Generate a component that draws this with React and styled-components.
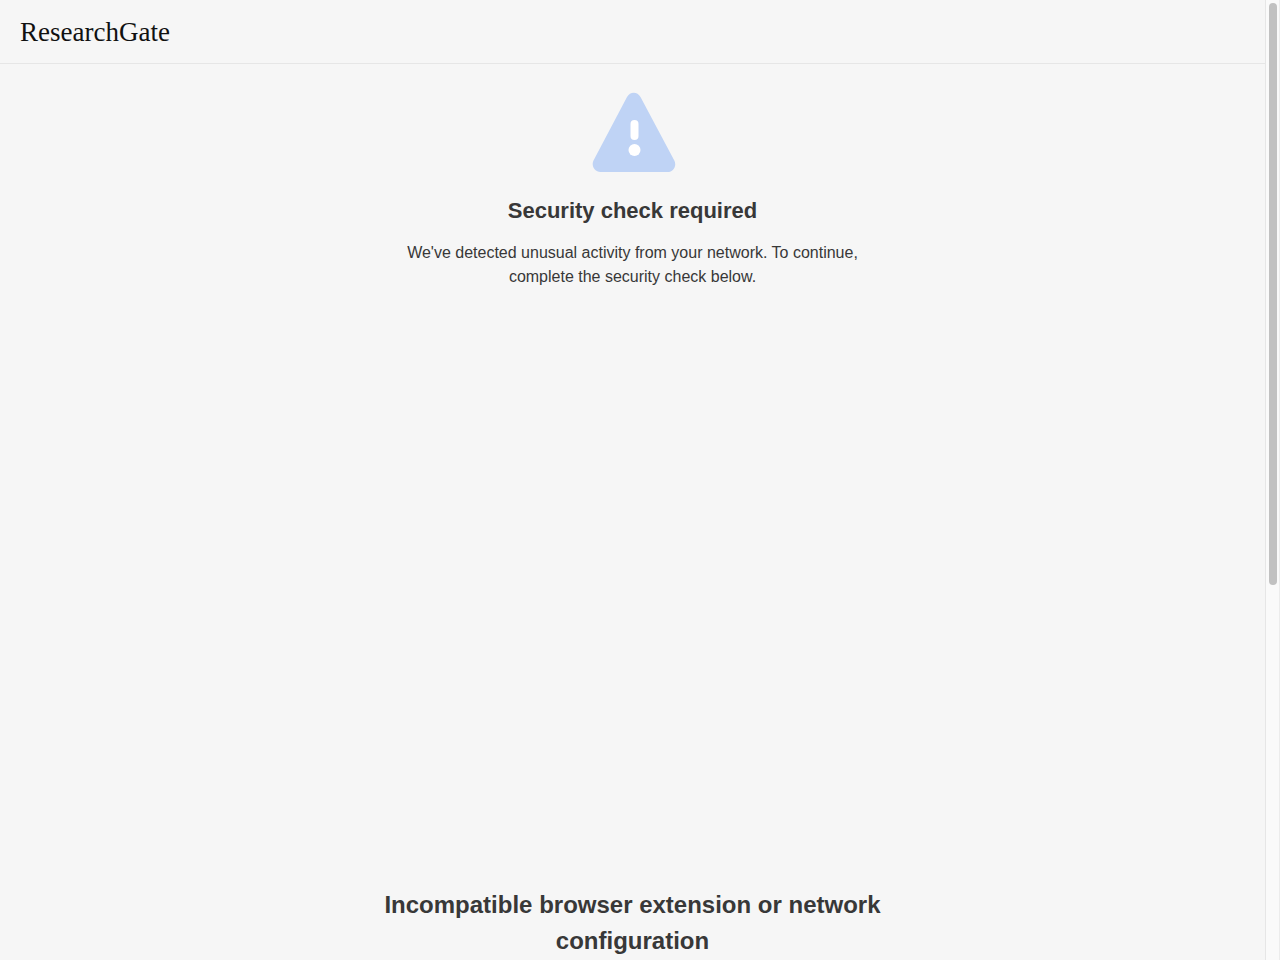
import React from "react";
import styled, { createGlobalStyle } from "styled-components";

const GlobalStyle = createGlobalStyle`
  * {
    box-sizing: border-box;
  }

  body {
    margin: 0;
    background: #f6f6f6;
    color: #383838;
    font-family: "Liberation Sans", Arial, sans-serif;
  }
`;

const Page = styled.div`
  display: flex;
  height: 100vh;
  overflow: hidden;
`;

const Content = styled.div`
  flex: 1;
  min-width: 0;
  overflow: hidden;
`;

const Header = styled.header`
  display: flex;
  align-items: center;
  height: 64px;
  padding: 0 20px;
  border-bottom: 1px solid #e6e6e6;
`;

const Logo = styled.a`
  color: #111;
  font-family: "Liberation Serif", "Times New Roman", serif;
  font-size: 27px;
  line-height: 32px;
  text-decoration: none;
`;

const Main = styled.main`
  display: flex;
  flex-direction: column;
  align-items: center;
  max-width: 512px;
  margin: 0 auto;
  padding-top: 28px;
  text-align: center;
`;

const WarningIcon = styled.svg`
  display: block;
  width: 87px;
  height: 80px;
`;

const Title = styled.h1`
  margin: 23px 0 14px;
  font-size: 22px;
  line-height: 32px;
`;

const Text = styled.p`
  margin: 0;
  font-size: 16px;
  line-height: 24px;
`;

const Challenge = styled.section`
  width: 100%;
  height: 598px;
  flex-shrink: 0;
`;

const ErrorTitle = styled.h2`
  margin: 0;
  font-size: 24px;
  line-height: 36px;
`;

const ScrollTrack = styled.div`
  width: 15px;
  padding: 3px 2px 3px 3px;
  background: #fafafa;
  border-left: 1px solid #e6e6e6;
  border-right: 1px solid #ececec;
`;

const ScrollThumb = styled.div`
  width: 8px;
  height: 61%;
  border-radius: 4px;
  background: #c1c1c1;
`;

function Warning() {
  return (
    <WarningIcon viewBox="0 0 87 80" aria-hidden="true">
      <path
        d="M38 5C41 -.8 48.500 -.8 51.500 5L85.300 68.500C88 73.500 84.500 80 78.500 80H11.500C5.500 80 2 73.500 4.500 68.500Z"
        fill="#bfd3f5"
      />
      <rect x="41.500" y="28" width="8" height="20" rx="4" fill="#fff" />
      <circle cx="45.500" cy="58" r="6" fill="#fff" />
    </WarningIcon>
  );
}

export default function App() {
  return (
    <>
      <GlobalStyle />
      <Page>
        <Content>
          <Header>
            <Logo href="/">ResearchGate</Logo>
          </Header>
          <Main>
            <Warning />
            <Title>Security check required</Title>
            <Text>
              We've detected unusual activity from your network. To continue,
              complete the security check below.
            </Text>
            <Challenge aria-label="Security check" />
            <ErrorTitle>
              Incompatible browser extension or network configuration
            </ErrorTitle>
          </Main>
        </Content>
        <ScrollTrack>
          <ScrollThumb />
        </ScrollTrack>
      </Page>
    </>
  );
}
